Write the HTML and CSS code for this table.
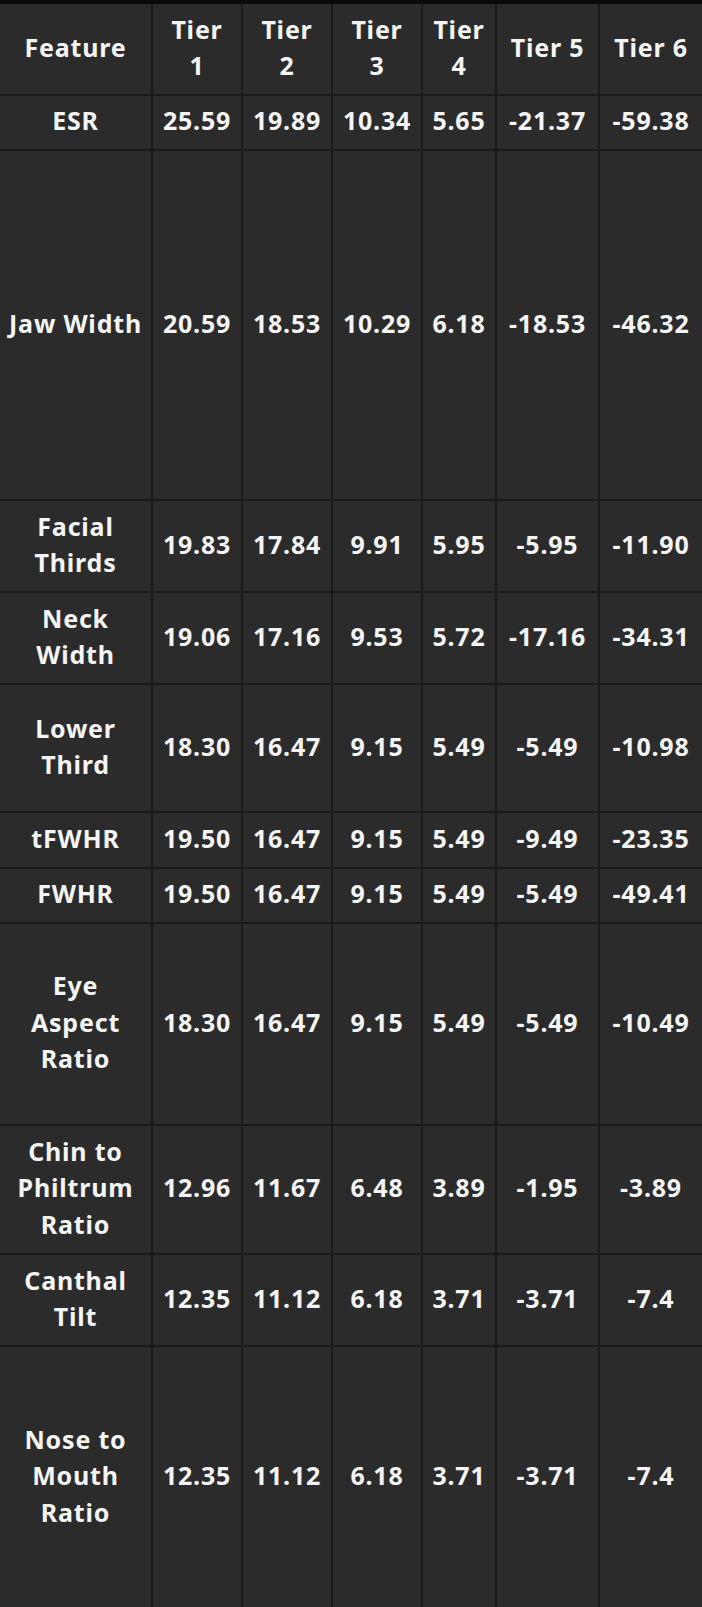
FILE: index.html
```html
<!DOCTYPE html>
<html>
<head>
<meta charset="utf-8">
<link rel="stylesheet" href="styles.css">
</head>
<body>
<div class="topbar"></div>
<table class="tiers">
  <colgroup>
    <col class="c-feat"><col class="c-t"><col class="c-t"><col class="c-t"><col class="c-t4"><col class="c-t5"><col class="c-t6">
  </colgroup>
  <thead>
    <tr class="h-head">
      <th>Feature</th><th>Tier<br>1</th><th>Tier<br>2</th><th>Tier<br>3</th><th>Tier<br>4</th><th>Tier 5</th><th>Tier 6</th>
    </tr>
  </thead>
  <tbody>
    <tr class="h-55"><td>ESR</td><td>25.59</td><td>19.89</td><td>10.34</td><td>5.65</td><td>-21.37</td><td>-59.38</td></tr>
    <tr class="h-jaw"><td>Jaw Width</td><td>20.59</td><td>18.53</td><td>10.29</td><td>6.18</td><td>-18.53</td><td>-46.32</td></tr>
    <tr class="h-92"><td>Facial<br>Thirds</td><td>19.83</td><td>17.84</td><td>9.91</td><td>5.95</td><td>-5.95</td><td>-11.90</td></tr>
    <tr class="h-92"><td>Neck<br>Width</td><td>19.06</td><td>17.16</td><td>9.53</td><td>5.72</td><td>-17.16</td><td>-34.31</td></tr>
    <tr class="h-128"><td>Lower<br>Third</td><td>18.30</td><td>16.47</td><td>9.15</td><td>5.49</td><td>-5.49</td><td>-10.98</td></tr>
    <tr class="h-56"><td>tFWHR</td><td>19.50</td><td>16.47</td><td>9.15</td><td>5.49</td><td>-9.49</td><td>-23.35</td></tr>
    <tr class="h-55"><td>FWHR</td><td>19.50</td><td>16.47</td><td>9.15</td><td>5.49</td><td>-5.49</td><td>-49.41</td></tr>
    <tr class="h-eye"><td>Eye<br>Aspect<br>Ratio</td><td>18.30</td><td>16.47</td><td>9.15</td><td>5.49</td><td>-5.49</td><td>-10.49</td></tr>
    <tr class="h-129"><td>Chin to<br>Philtrum<br>Ratio</td><td>12.96</td><td>11.67</td><td>6.48</td><td>3.89</td><td>-1.95</td><td>-3.89</td></tr>
    <tr class="h-92"><td>Canthal<br>Tilt</td><td>12.35</td><td>11.12</td><td>6.18</td><td>3.71</td><td>-3.71</td><td>-7.4</td></tr>
    <tr class="h-nose"><td>Nose to<br>Mouth<br>Ratio</td><td>12.35</td><td>11.12</td><td>6.18</td><td>3.71</td><td>-3.71</td><td>-7.4</td></tr>
  </tbody>
</table>
</body>
</html>
```
FILE: styles.css
```css
html, body {
  margin: 0;
  padding: 0;
  background: #2b2b2b;
}
body {
  width: 702px;
  overflow: hidden;
  font-family: "Noto Sans", "Open Sans", "Liberation Sans", sans-serif;
}
.topbar {
  height: 4px;
  background: #0a0a0a;
}
.tiers {
  width: 702px;
  table-layout: fixed;
  border-collapse: collapse;
  color: #f4f4f4;
  font-size: 25px;
  font-weight: 700;
  line-height: 36.5px;
  letter-spacing: 0.8px;
}
.c-feat { width: 152px; }
.c-t { width: 90px; }
.c-t4 { width: 74px; }
.c-t5 { width: 103px; }
.c-t6 { width: 103px; }
.tiers th, .tiers td {
  padding: 0 0 4px;
  text-align: center;
  vertical-align: middle;
  border: 2px solid #1a1a1a;
  font-weight: 700;
  white-space: nowrap;
}
.tiers thead th { border-top: none; }
.tiers tr > :first-child { border-left: none; }
.tiers tr > :last-child { border-right: none; }
.tiers tbody tr:last-child td { border-bottom: none; }
.h-head { height: 91px; }
.h-55 { height: 55px; }
.h-56 { height: 56px; }
.h-jaw { height: 350px; }
.h-92 { height: 92px; }
.h-128 { height: 128px; }
.h-eye { height: 202px; }
.h-129 { height: 129px; }
.h-nose { height: 262px; }
```
